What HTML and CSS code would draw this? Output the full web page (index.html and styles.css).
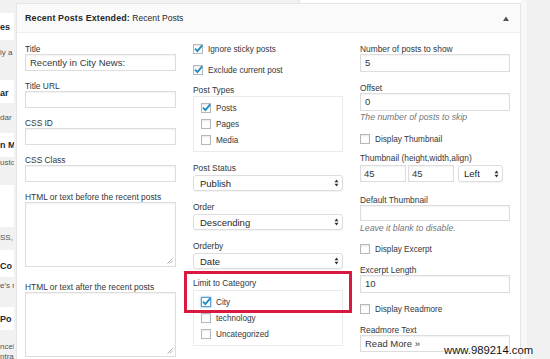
FILE: index.html
```html
<!DOCTYPE html>
<html>
<head>
<meta charset="utf-8">
<link rel="stylesheet" href="styles.css">
</head>
<body>
<div class="page">
  <aside class="sidebar">
    <div class="sb-gap"></div>
    <div class="sb-title sb-t1">es</div>
    <div class="sb-desc sb-d1">ly a</div>
    <div class="sb-title sb-t2">ar</div>
    <div class="sb-desc sb-d2">dar</div>
    <div class="sb-title sb-t3">n M</div>
    <div class="sb-desc sb-d3">usto</div>
    <div class="sb-title sb-t4"></div>
    <div class="sb-desc sb-d4">SS,</div>
    <div class="sb-title sb-t5">Co</div>
    <div class="sb-desc sb-d5">e's r</div>
    <div class="sb-title sb-t6">Po</div>
    <div class="sb-desc sb-d6">ncel<br>ntra</div>
  </aside>

  <main class="main">
    <div class="topstrip"><div class="ts-left"></div><div class="ts-right"></div></div>
    <section class="panel">
      <header class="panel-head">
        <h3 class="panel-title"><strong>Recent Posts Extended:</strong> Recent Posts</h3>
        <svg class="toggle" width="6" height="5" viewBox="0 0 6 5"><path d="M0 5 L3 0.5 L6 5 Z" fill="#555"/></svg>
      </header>
      <div class="panel-body">
        <div class="col">
          <div class="field">
            <label class="label">Title</label>
            <div class="input">Recently in City News:</div>
          </div>
          <div class="field">
            <label class="label">Title URL</label>
            <div class="input"></div>
          </div>
          <div class="field">
            <label class="label">CSS ID</label>
            <div class="input"></div>
          </div>
          <div class="field">
            <label class="label">CSS Class</label>
            <div class="input"></div>
          </div>
          <div class="field field-ta">
            <label class="label">HTML or text before the recent posts</label>
            <div class="textarea"><svg class="grip" width="6" height="6" viewBox="0 0 6 6"><path d="M0.5 5.5 L5.5 0.5 M3 5.5 L5.5 3" stroke="#999" stroke-width="0.8"/></svg></div>
          </div>
          <div class="field">
            <label class="label">HTML or text after the recent posts</label>
            <div class="textarea"><svg class="grip" width="6" height="6" viewBox="0 0 6 6"><path d="M0.5 5.5 L5.5 0.5 M3 5.5 L5.5 3" stroke="#999" stroke-width="0.8"/></svg></div>
          </div>
        </div>

        <div class="col">
          <div class="check-row cr1"><span class="cb"><svg class="tick" viewBox="0 0 12 12"><path d="M2.2 6.2 L4.8 8.8 L10 2.6" fill="none" stroke="#1e8cbe" stroke-width="2"/></svg></span>Ignore sticky posts</div>
          <div class="check-row cr2"><span class="cb"><svg class="tick" viewBox="0 0 12 12"><path d="M2.2 6.2 L4.8 8.8 L10 2.6" fill="none" stroke="#1e8cbe" stroke-width="2"/></svg></span>Exclude current post</div>
          <label class="label">Post Types</label>
          <div class="listbox lb-types">
            <div class="list-row"><span class="cb"><svg class="tick" viewBox="0 0 12 12"><path d="M2.2 6.2 L4.8 8.8 L10 2.6" fill="none" stroke="#1e8cbe" stroke-width="2"/></svg></span>Posts</div>
            <div class="list-row"><span class="cb"></span>Pages</div>
            <div class="list-row"><span class="cb"></span>Media</div>
          </div>
          <div class="field fs">
            <label class="label">Post Status</label>
            <div class="select"><span>Publish</span><svg class="arrows" width="5" height="8" viewBox="0 0 5 8"><path d="M0.5 3.3 L2.5 0.5 L4.5 3.3 Z M0.5 4.7 L2.5 7.5 L4.5 4.7 Z" fill="#333"/></svg></div>
          </div>
          <div class="field fs">
            <label class="label">Order</label>
            <div class="select"><span>Descending</span><svg class="arrows" width="5" height="8" viewBox="0 0 5 8"><path d="M0.5 3.3 L2.5 0.5 L4.5 3.3 Z M0.5 4.7 L2.5 7.5 L4.5 4.7 Z" fill="#333"/></svg></div>
          </div>
          <div class="field fs fs-last">
            <label class="label">Orderby</label>
            <div class="select"><span>Date</span><svg class="arrows" width="5" height="8" viewBox="0 0 5 8"><path d="M0.5 3.3 L2.5 0.5 L4.5 3.3 Z M0.5 4.7 L2.5 7.5 L4.5 4.7 Z" fill="#333"/></svg></div>
          </div>
          <label class="label">Limit to Category</label>
          <div class="listbox lb-cat">
            <div class="list-row"><span class="cb cb-focus"><svg class="tick" viewBox="0 0 12 12"><path d="M2.2 6.2 L4.8 8.8 L10 2.6" fill="none" stroke="#1e8cbe" stroke-width="2"/></svg></span>City</div>
            <div class="list-row"><span class="cb"></span>technology</div>
            <div class="list-row"><span class="cb"></span>Uncategorized</div>
          </div>
        </div>

        <div class="col">
          <div class="field f3a">
            <label class="label">Number of posts to show</label>
            <div class="input input-tall">5</div>
          </div>
          <div class="field f3b">
            <label class="label">Offset</label>
            <div class="input input-tall">0</div>
            <p class="hint">The number of posts to skip</p>
          </div>
          <div class="check-row cr3"><span class="cb"></span>Display Thumbnail</div>
          <div class="field f3c">
            <label class="label">Thumbnail (height,width,align)</label>
            <div class="thumb-row">
              <div class="input">45</div>
              <div class="input">45</div>
              <div class="select sel-small"><span>Left</span><svg class="arrows" width="5" height="8" viewBox="0 0 5 8"><path d="M0.5 3.3 L2.5 0.5 L4.5 3.3 Z M0.5 4.7 L2.5 7.5 L4.5 4.7 Z" fill="#333"/></svg></div>
            </div>
          </div>
          <div class="field f3d">
            <label class="label">Default Thumbnail</label>
            <div class="input input-short"></div>
            <p class="hint hint-2">Leave it blank to disable.</p>
          </div>
          <div class="check-row cr4"><span class="cb"></span>Display Excerpt</div>
          <div class="field f3e">
            <label class="label">Excerpt Length</label>
            <div class="input input-tall">10</div>
          </div>
          <div class="check-row cr4"><span class="cb"></span>Display Readmore</div>
          <div class="field">
            <label class="label">Readmore Text</label>
            <div class="input">Read More »</div>
          </div>
        </div>
      </div>
    </section>
  </main>
  <div class="rightpad"></div>

  <div class="highlight"></div>
  <div class="watermark">www.989214.com</div>
</div>
</body>
</html>
```

FILE: styles.css
```css
html, body {
  margin: 0;
  padding: 0;
  background: #f1f1f1;
  font-family: "Liberation Sans", Arial, sans-serif;
  color: #32373c;
}

.page {
  position: relative;
  width: 550px;
  height: 359px;
  overflow: hidden;
  display: flex;
  align-items: flex-start;
}

/* ---------- left clipped sidebar ---------- */
.sidebar {
  width: 14px;
  margin-right: 2px;
  flex: none;
  overflow: hidden;
  display: flex;
  flex-direction: column;
}
.sb-gap { height: 13px; }
.sb-title {
  background: #fff;
  font-weight: bold;
  font-size: 9px;
  color: #23282d;
  white-space: nowrap;
  overflow: hidden;
  display: flex;
  align-items: center;
}
.sb-desc {
  font-size: 8px;
  line-height: 10px;
  color: #555;
  white-space: nowrap;
  overflow: hidden;
  box-sizing: border-box;
}
.sb-t1 { height: 27px; }
.sb-d1 { height: 40px; padding-top: 8px; }
.sb-t2 { height: 23px; padding-top: 2px; box-sizing: border-box; }
.sb-d2 { height: 30px; padding-top: 10px; }
.sb-t3 { height: 24px; }
.sb-d3 { height: 28px; padding-top: 1px; }
.sb-t4 { height: 42px; }
.sb-d4 { height: 23px; padding-top: 6px; }
.sb-t5 { height: 27px; padding-top: 5px; box-sizing: border-box; }
.sb-d5 { height: 30px; padding-top: 4px; }
.sb-t6 { height: 23px; }
.sb-d6 { height: 40px; padding-top: 12px; line-height: 10px; }

/* ---------- main column ---------- */
.main {
  width: 505px;
  flex: none;
}
.topstrip {
  height: 3px;
  display: flex;
}
.ts-left { width: 283px; background: #f1f1f1; border-right: 1px solid #e2e2e2; }
.ts-right { flex: 1; background: #fff; }

.rightpad {
  width: 6px;
  height: 359px;
  background: #f8f8f8;
  flex: none;
}

.panel {
  background: #fff;
  border: 1px solid #e5e5e5;
  box-sizing: border-box;
  height: 400px;
}
.panel-head {
  height: 28px;
  background: #fafafa;
  border-bottom: 1px solid #eeeeee;
  display: flex;
  align-items: center;
  justify-content: space-between;
  padding: 0 11px 0 8px;
}
.panel-title {
  margin: 0;
  font-size: 8.6px;
  font-weight: normal;
  color: #23282d;
}
.panel-title strong { font-weight: bold; letter-spacing: 0.15px; font-size: 8.9px; }
.toggle { display: block; }

.panel-body {
  display: grid;
  grid-template-columns: 151px 150px 150px;
  column-gap: 17px;
  padding: 11px 8px 0;
}
.col { display: flex; flex-direction: column; }

.label {
  display: block;
  height: 10px;
  line-height: 10px;
  font-size: 8.4px;
  color: #32373c;
  white-space: nowrap;
}
.field { margin-bottom: 10px; }
.field-ta { margin-bottom: 15px; }

.input {
  height: 17px;
  box-sizing: border-box;
  border: 1px solid #dddddd;
  box-shadow: inset 0 1px 2px rgba(0,0,0,.06);
  background: #fff;
  font-size: 9.5px;
  line-height: 15px;
  padding: 0 4px;
  color: #32373c;
  white-space: nowrap;
  overflow: hidden;
}
.input-tall { height: 18px; line-height: 16px; }
.input-short { height: 16px; line-height: 14px; }

.textarea {
  position: relative;
  height: 65px;
  box-sizing: border-box;
  border: 1px solid #dddddd;
  box-shadow: inset 0 1px 2px rgba(0,0,0,.06);
  background: #fff;
}
.grip { position: absolute; right: 2px; bottom: 2px; }

/* checkboxes */
.check-row, .list-row {
  display: flex;
  align-items: center;
  font-size: 8.2px;
  color: #32373c;
  white-space: nowrap;
}
.check-row { height: 10px; }
.cr1 { margin-bottom: 11px; }
.cr2 { margin-bottom: 10px; }
.cb {
  position: relative;
  width: 10px;
  height: 10px;
  box-sizing: border-box;
  border: 1px solid #b4b9be;
  background: #fff;
  box-shadow: inset 0 1px 2px rgba(0,0,0,.1);
  margin-right: 5px;
  flex: none;
}
.cb-focus {
  border-color: #5b9dd9;
  box-shadow: 0 0 2px rgba(30,140,190,.8);
}
.tick {
  position: absolute;
  left: -1px;
  top: -2px;
  width: 11px;
  height: 11px;
}

.listbox {
  margin-top: 1px;
  border: 1px solid #eaeaea;
  padding: 3px 7px;
}
.lb-types { margin-bottom: 11px; }
.lb-cat { margin-top: 2px; }
.list-row { height: 16px; }

/* selects */
.fs { margin-bottom: 11px; }
.fs-last { margin-bottom: 9px; }
.fs .select { margin-top: 2px; }
.select {
  height: 16px;
  box-sizing: border-box;
  border: 1px solid #dddddd;
  border-radius: 3px;
  background: #fff;
  box-shadow: 0 1px 1px rgba(0,0,0,.05);
  display: flex;
  align-items: center;
  justify-content: space-between;
  padding: 0 3px 0 6px;
  font-size: 9.5px;
  color: #23282d;
}
.arrows { display: block; }

/* column 3 */
.f3a { margin-bottom: 11px; }
.f3b { margin-bottom: 12px; }
.hint {
  margin: 1px 0 0;
  height: 10px;
  line-height: 10px;
  font-size: 8.7px;
  font-style: italic;
  color: #72777c;
  white-space: nowrap;
}
.hint-2 { margin-top: 2px; }
.cr3 { margin-bottom: 9px; }
.f3c { margin-bottom: 13px; }
.thumb-row {
  margin-top: 2px;
  display: flex;
  gap: 2px;
}
.thumb-row .input { width: 46px; flex: none; padding-left: 3px; }
.sel-small { width: 45px; height: 17px; margin-left: 2px; flex: none; padding-left: 5px; }
.f3d { margin-bottom: 11px; }
.cr4 { margin-bottom: 11px; }
.f3e { margin-bottom: 11px; }

/* annotation overlay */
.highlight {
  position: absolute;
  left: 184px;
  top: 271px;
  width: 168px;
  height: 42px;
  box-sizing: border-box;
  border: 3px solid #d9193f;
}
.watermark {
  position: absolute;
  left: 444px;
  top: 343px;
  font-size: 11.3px;
  line-height: 14px;
  color: #111;
  text-shadow: 0 0 2px #fff, 0 0 2px #fff, 0 0 2px #fff;
  white-space: nowrap;
}
```
